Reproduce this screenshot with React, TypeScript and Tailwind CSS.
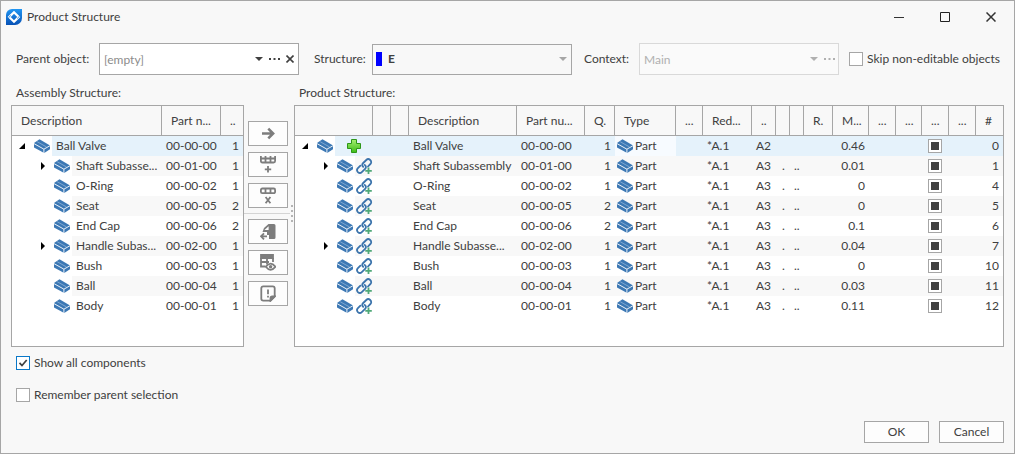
import type { ReactNode } from 'react'
import clsx from 'clsx'

interface Part {
    name: string
    shortName?: string
    productName?: string
    partNumber: string
    quantity: number
    format: string
    mass: string
    position: number
    root?: boolean
    expandable?: boolean
}

const parts: Part[] = [
    { name: 'Ball Valve', partNumber: '00-00-00', quantity: 1, format: 'A2', mass: '0.46', position: 0, root: true },
    { name: 'Shaft Subassembly', shortName: 'Shaft Subasse...', partNumber: '00-01-00', quantity: 1, format: 'A3', mass: '0.01', position: 1, expandable: true },
    { name: 'O-Ring', partNumber: '00-00-02', quantity: 1, format: 'A3', mass: '0', position: 4 },
    { name: 'Seat', partNumber: '00-00-05', quantity: 2, format: 'A3', mass: '0', position: 5 },
    { name: 'End Cap', partNumber: '00-00-06', quantity: 2, format: 'A3', mass: '0.1', position: 6 },
    { name: 'Handle Subassembly', shortName: 'Handle Subas...', productName: 'Handle Subasse...', partNumber: '00-02-00', quantity: 1, format: 'A3', mass: '0.04', position: 7, expandable: true },
    { name: 'Bush', partNumber: '00-00-03', quantity: 1, format: 'A3', mass: '0', position: 10 },
    { name: 'Ball', partNumber: '00-00-04', quantity: 1, format: 'A3', mass: '0.03', position: 11 },
    { name: 'Body', partNumber: '00-00-01', quantity: 1, format: 'A3', mass: '0.11', position: 12 },
]

const productHeaders = ['', '', '', 'Description', 'Part nu...', 'Q.', 'Type', '...', 'Red...', '..', '', '', 'R.', 'M...', '...', '...', '...', '...', '#']

const rowColor = (index: number) =>
    index === 0 ? 'bg-[#e5f2fb]' : index % 2 ? 'bg-[#f8f8f8]' : 'bg-white'

const PartIcon = () => (
    <svg width="16" height="14" viewBox="0 0 16 14" className="shrink-0">
        <path d="M0 4 5.5 0.3 16 6.4V10.2L10.2 14 0 8.4Z" fill="#3c78b4" />
        <path d="M0 4.6 9.9 10.2 16 6.7M9.9 10.2V14" fill="none" stroke="#fff" strokeWidth="0.9" />
        <path d="M3.2 2.7 12.6 8" stroke="#a9c6e2" strokeWidth="0.6" />
    </svg>
)

const LinkIcon = () => (
    <svg width="17" height="17" viewBox="0 0 17 17" fill="none" className="shrink-0">
        <g stroke="#3c74ac" strokeWidth="1.8" strokeLinecap="round">
            <path d="M7.2 8.8 C5.8 7.4 6.2 6 7.2 5 L10.3 2 C11.4 0.9 13 0.9 14.2 2 C15.5 3.2 15.5 4.9 14.4 6 L12 8.5" />
            <path d="M8.7 6.9 C10.4 8.3 10.2 9.7 9.1 10.8 L5.8 14.1 C4.7 15.2 3.1 15.2 1.9 14.1 C0.8 12.9 0.8 11.3 1.9 10.2 L4.4 7.7" />
        </g>
        <path d="M12.5 9.5v6.5M9.3 12.8h6.5" stroke="#4fa878" strokeWidth="1.8" />
    </svg>
)

const PlusIcon = () => (
    <svg width="14" height="14" viewBox="0 0 14 14">
        <defs>
            <linearGradient id="plus" x1="0" y1="0" x2="0" y2="1">
                <stop offset="0" stopColor="#a5ee72" />
                <stop offset="1" stopColor="#3ebd18" />
            </linearGradient>
        </defs>
        <path d="M4.5 0.5h5v4h4v5h-4v4h-5v-4h-4v-5h4z" fill="url(#plus)" stroke="#2d9618" />
    </svg>
)

const Expander = ({ part }: { part: Part }) => (
    <span className="flex w-4 shrink-0 items-center">
        {part.root && (
            <svg width="8" height="8" viewBox="0 0 8 8"><path d="M7 1v6H1z" fill="#000" /></svg>
        )}
        {part.expandable && (
            <svg width="8" height="8" viewBox="0 0 8 8"><path d="M3 0l4 4-4 4z" fill="#000" /></svg>
        )}
    </span>
)

const TreePrefix = ({ part }: { part: Part }) => (
    <span className={clsx('flex h-5 shrink-0 items-center bg-white', part.root ? 'w-10 pl-1.5' : 'w-15 pl-6.5')}>
        <Expander part={part} />
        <PartIcon />
    </span>
)

const HeaderCell = ({ children }: { children?: ReactNode }) => (
    <th className="h-[30px] border-r border-b border-[#a6a6a6] bg-[#f8f8f8] pl-[9px] text-left font-normal last:border-r-0">
        {children}
    </th>
)

const CheckBox = ({ label, checked }: { label: string; checked?: boolean }) => (
    <label className="flex h-3.5 w-fit items-center gap-1">
        <span className="grid size-3.5 shrink-0">
            <input
                type="checkbox"
                defaultChecked={checked}
                className="peer col-start-1 row-start-1 size-3.5 appearance-none border border-[#a6a6a6] bg-white checked:border-[#0a78c8]"
            />
            <svg viewBox="0 0 14 14" className="pointer-events-none invisible col-start-1 row-start-1 size-3.5 peer-checked:visible">
                <path d="M3.5 6.8 6 9.5 10.7 4" fill="none" stroke="#404040" strokeWidth="1.7" />
            </svg>
        </span>
        {label}
    </label>
)

const Arrow = () => (
    <svg width="8" height="4" viewBox="0 0 8 4"><path d="M0 0h8L4 4z" fill="currentColor" /></svg>
)

const Dots = () => (
    <svg width="11" height="2" viewBox="0 0 11 2" fill="currentColor">
        <path d="M0 0h2v2H0zM4.5 0h2v2h-2zM9 0h2v2H9z" />
    </svg>
)

const ToolButton = ({ label, children }: { label: string; children: ReactNode }) => (
    <button aria-label={label} className="ml-1 flex h-[25px] w-10 items-center justify-center border border-[#a6a6a6] bg-[#fdfdfd]">
        <svg width="16" height="17" viewBox="0 0 16 17" fill="none" stroke="#7d7d7d" strokeWidth="1.8">
            {children}
        </svg>
    </button>
)

const TitleBar = () => (
    <header className="flex h-8 items-center pl-[5px]">
        <svg width="16" height="16" viewBox="0 0 16 16">
            <defs>
                <linearGradient id="logo" x1="0" y1="0" x2="0" y2="1">
                    <stop offset="0" stopColor="#2196f3" />
                    <stop offset="1" stopColor="#0751b5" />
                </linearGradient>
            </defs>
            <path d="M6 0h10v9a7 7 0 0 1-7 7H0V6a6 6 0 0 1 6-6z" fill="url(#logo)" />
            <path d="M4.6 6.6 8 3.2 12.8 8 11.4 9.4" fill="none" stroke="#fff" strokeWidth="2.2" />
            <path d="M11.4 9.4 8 12.8 3.2 8 4.6 6.6" fill="none" stroke="#fff" strokeWidth="2.2" />
            <path d="M2.5 8.7 4.6 6.8M13.5 7.3l-2.1 1.9" stroke="#0d6dce" strokeWidth="0.8" />
        </svg>
        <h1 className="grow pl-[5px]">Product Structure</h1>
        <button aria-label="Minimize" className="flex h-8 w-[46px] items-center justify-center">
            <svg width="10" height="10"><path d="M0 5.5h10" stroke="#333" /></svg>
        </button>
        <button aria-label="Maximize" className="flex h-8 w-[46px] items-center justify-center">
            <svg width="10" height="10"><path d="M.5 .5h9v9h-9z" stroke="#222" fill="none" /></svg>
        </button>
        <button aria-label="Close" className="flex h-8 w-[46px] items-center justify-center">
            <svg width="10" height="10"><path d="M.5 .5l9 9M9.5 .5l-9 9" stroke="#333" strokeWidth="1.5" /></svg>
        </button>
    </header>
)

const Filters = () => (
    <div className="flex items-center pt-2.5 pl-[15px]">
        <label htmlFor="parent" className="w-[83px] shrink-0">Parent object:</label>
        <div className="flex h-8 w-[200px] items-center border border-[#a6a6a6] bg-white pr-1">
            <input id="parent" placeholder="[empty]" className="h-full min-w-0 grow pl-1 outline-none placeholder:text-[#8c8c8c]" />
            <button aria-label="Open list" className="pr-1.5"><Arrow /></button>
            <button aria-label="Browse" className="pr-1.5"><Dots /></button>
            <button aria-label="Clear">
                <svg width="8" height="8" viewBox="0 0 8 8"><path d="M.5 .5l7 7M7.5 .5l-7 7" stroke="#404040" strokeWidth="1.6" /></svg>
            </button>
        </div>
        <label htmlFor="structure" className="ml-[15px] w-[58px] shrink-0">Structure:</label>
        <div className="flex h-[31px] w-[200px] items-center border border-[#a6a6a6] pr-1 pl-[3px]">
            <span className="h-3.5 w-1.5 bg-[#0000ff]" />
            <select id="structure" className="h-full grow appearance-none pl-1.5 font-bold outline-none">
                <option>E</option>
            </select>
            <span className="text-[#a6a6a6]"><Arrow /></span>
        </div>
        <label htmlFor="context" className="ml-3 w-[55px] shrink-0">Context:</label>
        <div className="flex h-8 w-[200px] items-center border border-[#d9d9d9] bg-[#fafafa] pr-[3px] text-[#b0b0b0]">
            <input id="context" disabled defaultValue="Main" className="h-full min-w-0 grow pl-1" />
            <button disabled aria-label="Open context list" className="pr-1.5"><Arrow /></button>
            <button disabled aria-label="Browse context"><Dots /></button>
        </div>
        <div className="ml-2.5 whitespace-nowrap"><CheckBox label="Skip non-editable objects" /></div>
    </div>
)

const AssemblyTable = () => (
    <table className="w-full table-fixed border-separate border-spacing-0 whitespace-nowrap">
        <colgroup>
            <col />
            <col className="w-[59px]" />
            <col className="w-[22px]" />
        </colgroup>
        <thead>
            <tr>
                <HeaderCell>Description</HeaderCell>
                <HeaderCell>Part n...</HeaderCell>
                <HeaderCell>..</HeaderCell>
            </tr>
        </thead>
        <tbody>
            {parts.map((part, i) => (
                <tr key={part.partNumber} className={clsx('h-5', rowColor(i))}>
                    <td className="p-0">
                        <div className="flex h-5 items-center gap-1">
                            <TreePrefix part={part} />
                            {part.shortName ?? part.name}
                        </div>
                    </td>
                    <td className="py-0 pr-0 pl-1">{part.partNumber}</td>
                    <td className="py-0 pr-1 pl-0 text-right">{part.quantity}</td>
                </tr>
            ))}
        </tbody>
    </table>
)

const ProductTable = () => (
    <table className="w-full table-fixed border-separate border-spacing-0 whitespace-nowrap">
        <colgroup>
            <col className="w-[78px]" />
            <col className="w-[18px]" />
            <col className="w-[18px]" />
            <col />
            <col className="w-[68px]" />
            <col className="w-[30px]" />
            <col className="w-[61px]" />
            <col className="w-[27px]" />
            <col className="w-[49px]" />
            <col className="w-[24px]" />
            <col className="w-[14px]" />
            <col className="w-[14px]" />
            <col className="w-[29px]" />
            <col className="w-[36px]" />
            <col className="w-[27px]" />
            <col className="w-[26px]" />
            <col className="w-[27px]" />
            <col className="w-[27px]" />
            <col className="w-[27px]" />
        </colgroup>
        <thead>
            <tr>
                {productHeaders.map((title, i) => (
                    <HeaderCell key={i}>{title}</HeaderCell>
                ))}
            </tr>
        </thead>
        <tbody>
            {parts.map((part, i) => (
                <tr key={part.partNumber} className={clsx('h-5', rowColor(i))}>
                    <td className="p-0">
                        <div className="flex h-5 items-center">
                            <TreePrefix part={part} />
                            <span className={part.root ? 'pl-3' : 'pl-px'}>
                                {part.root ? <PlusIcon /> : <LinkIcon />}
                            </span>
                        </div>
                    </td>
                    <td />
                    <td />
                    <td className="py-0 pr-0 pl-1">{part.productName ?? part.name}</td>
                    <td className="py-0 pr-0 pl-1">{part.partNumber}</td>
                    <td className="py-0 pr-1 pl-0 text-right">{part.quantity}</td>
                    <td className={clsx('p-0', part.root && 'bg-[#f7fbff]')}>
                        <div className="flex h-5 items-center gap-0.5 pl-0.5">
                            <PartIcon />
                            Part
                        </div>
                    </td>
                    <td />
                    <td className="py-0 pr-0 pl-1">*A.1</td>
                    <td className="py-0 pr-0 pl-1">{part.format}</td>
                    <td className="py-0 pr-0 pl-1.5">{!part.root && '.'}</td>
                    <td className="py-0 pr-0 pl-1">{!part.root && '..'}</td>
                    <td />
                    <td className="py-0 pr-1 pl-0 text-right">{part.mass}</td>
                    <td />
                    <td />
                    <td className="py-0 pr-0 pl-1.5">
                        <input
                            type="checkbox"
                            defaultChecked
                            aria-label={`Include ${part.name}`}
                            className="block size-3.5 appearance-none border border-[#a6a6a6] bg-white shadow-[inset_0_0_0_2px_white] checked:bg-[#404040]"
                        />
                    </td>
                    <td />
                    <td className="py-0 pr-1 pl-0 text-right">{part.position}</td>
                </tr>
            ))}
        </tbody>
    </table>
)

const Actions = () => (
    <div className="flex w-[50px] shrink-0 pt-10">
        <div className="flex grow flex-col gap-1.5">
            <ToolButton label="Move to product structure">
                <path d="M2 8.5h11M8.3 3.7l4.8 4.8-4.8 4.8" strokeWidth="2.6" />
            </ToolButton>
            <ToolButton label="Add column">
                <path d="M0.9 0v5q0 1.5 1.5 1.5h11.2q1.5 0 1.5-1.5V0M1 2.5h14M5.5 0v6M10.5 0v6" />
                <path d="M8 10v6.5M4.8 13.3h6.4" />
            </ToolButton>
            <ToolButton label="Remove column">
                <rect x="0.9" y="1.5" width="14.2" height="4.7" rx="1.4" />
                <path d="M5.5 2v4M10.5 2v4M5.6 10l4.8 6.3M10.4 10l-4.8 6.3" />
            </ToolButton>
            <div className="-my-px h-px bg-[#d4d4d4]" />
            <ToolButton label="Replace part">
                <path d="M8.5 1H14q1.5 0 1.5 1.5v12q0 1.5-1.5 1.5H9V12H7V9H2.5L4 5z" fill="#7d7d7d" stroke="none" />
                <path d="M4.5 7 8.6 3.2V7z" fill="#fdfdfd" stroke="none" />
                <path d="M1.2 13.3H7M4 10.3l-3 3L4 16.3" />
            </ToolButton>
            <ToolButton label="Show table">
                <path d="M1 1h12v3H1z" fill="#7d7d7d" />
                <path d="M1 4v8.5h4.5M7 4v6.5M1 8h8M13 4v4" />
                <path d="M5.8 12.8q4.7-6.3 9.6 0-4.9 6-9.6 0z" />
                <circle cx="10.6" cy="12.8" r="1.7" fill="#7d7d7d" stroke="none" />
            </ToolButton>
            <ToolButton label="Show notes">
                <path d="M3.3 1.3h9.4q2 0 2 2v8.2L10.5 15.7H3.3q-2 0-2-2V3.3q0-2 2-2z" />
                <path d="M10.5 15.7v-2.5q0-1.7 1.7-1.7h2.5z" fill="#7d7d7d" />
                <path d="M8 4.5v4.8M8 10.7v1.8" />
            </ToolButton>
        </div>
        <div className="flex w-1 flex-col items-center gap-[3px] pt-[84px]">
            <span className="size-0.5 bg-[#b4b4b4]" />
            <span className="size-0.5 bg-[#b4b4b4]" />
            <span className="size-0.5 bg-[#b4b4b4]" />
            <span className="size-0.5 bg-[#b4b4b4]" />
        </div>
    </div>
)

export default function App() {
    return (
        <div className="flex min-h-screen flex-col border border-[#a6a6a6] bg-[#f8f8f8] font-[Lato,sans-serif] text-[12px] leading-4 text-[#404040]">
            <TitleBar />
            <Filters />
            <main className="flex grow pt-1.5 pr-2.5 pl-2.5">
                <section className="flex w-[233px] shrink-0 flex-col">
                    <h2 className="flex h-6 items-center pl-[5px]">Assembly Structure:</h2>
                    <div className="grow border border-[#a6a6a6] bg-white">
                        <AssemblyTable />
                    </div>
                </section>
                <Actions />
                <section className="flex min-w-0 grow flex-col">
                    <h2 className="flex h-6 items-center pl-[5px]">Product Structure:</h2>
                    <div className="grow border border-[#a6a6a6] bg-white">
                        <ProductTable />
                    </div>
                </section>
            </main>
            <div className="flex flex-col gap-[18px] pt-[9px] pl-[15px]">
                <CheckBox label="Show all components" checked />
                <CheckBox label="Remember parent selection" />
            </div>
            <footer className="flex justify-end gap-2.5 px-2.5 pt-[19px] pb-2.5">
                <button className="h-[22px] w-[65px] border border-[#a6a6a6] bg-[#fdfdfd]">OK</button>
                <button className="h-[22px] w-[65px] border border-[#a6a6a6] bg-[#fdfdfd]">Cancel</button>
            </footer>
        </div>
    )
}
